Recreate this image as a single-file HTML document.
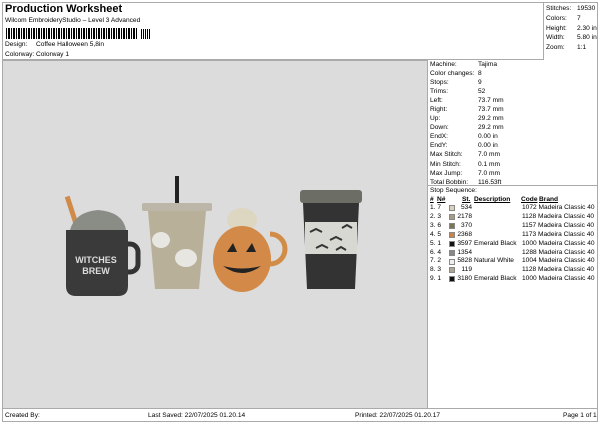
<!DOCTYPE html>
<html><head><style>
body{margin:0;width:600px;height:424px;background:#fff;font-family:"Liberation Sans",Arial,sans-serif;font-size:6.6px;color:#000;position:relative;overflow:hidden}
.a{position:absolute;white-space:nowrap}
.b{position:absolute;border:1px solid #999}
.sw{position:absolute;left:449px;width:6px;height:6px;box-sizing:border-box;border:1px solid #888}
</style></head><body>
<div class="b" style="left:2px;top:2px;width:594px;height:418px;border-color:#aaa"></div>
<div class="b" style="left:2px;top:2px;width:540px;height:56px;border-color:#aaa"></div>
<div class="a" style="left:5px;top:3px;font-size:11px;font-weight:bold">Production Worksheet</div>
<div class="a" style="left:5px;top:17px">Wilcom EmbroideryStudio – Level 3 Advanced</div>
<div class="a" style="left:6px;top:28px;width:132px;height:11px;background:repeating-linear-gradient(90deg,#000 0 1px,#fff 1px 2px,#000 2px 4px,#fff 4px 5px)"></div>
<div class="a" style="left:141px;top:29px;width:10px;height:10px;background:repeating-linear-gradient(90deg,#000 0 1px,#fff 1px 2px,#000 2px 3px,#fff 3px 4px)"></div>
<div class="a" style="left:5px;top:41px">Design:</div><div class="a" style="left:36px;top:41px">Coffee Halloween 5,8in</div>
<div class="a" style="left:5px;top:51px">Colorway:</div><div class="a" style="left:36px;top:51px">Colorway 1</div>
<div class="a" style="left:546px;top:4px;line-height:9.8px">Stitches:<br>Colors:<br>Height:<br>Width:<br>Zoom:</div>
<div class="a" style="left:577px;top:4px;line-height:9.8px">19530<br>7<br>2.30 in<br>5.80 in<br>1:1</div>
<div class="a" style="left:3px;top:60px;width:424px;height:348px;background:#dcdcdc;border-right:1px solid #aaa;border-top:1px solid #aaa"></div>
<div class="a" style="left:2px;top:408px;width:595px;border-top:1px solid #aaa"></div>
<div class="a" style="left:428px;top:185px;width:169px;border-top:1px solid #aaa"></div>
<div class="a" style="left:430px;top:60px;line-height:9.05px">Machine:<br>Color changes:<br>Stops:<br>Trims:<br>Left:<br>Right:<br>Up:<br>Down:<br>EndX:<br>EndY:<br>Max Stitch:<br>Min Stitch:<br>Max Jump:<br>Total Bobbin:</div>
<div class="a" style="left:478px;top:60px;line-height:9.05px">Tajima<br>8<br>9<br>52<br>73.7 mm<br>73.7 mm<br>29.2 mm<br>29.2 mm<br>0.00 in<br>0.00 in<br>7.0 mm<br>0.1 mm<br>7.0 mm<br>116.53ft</div>
<div class="a" style="left:430px;top:187px">Stop Sequence:</div>
<div class="a" style="left:430px;top:196px;font-weight:bold;text-decoration:underline">#</div>
<div class="a" style="left:437px;top:196px;font-weight:bold;text-decoration:underline">N#</div>
<div class="a" style="left:462px;top:196px;font-weight:bold;text-decoration:underline">St.</div>
<div class="a" style="left:474px;top:196px;font-weight:bold;text-decoration:underline">Description</div>
<div class="a" style="left:521px;top:196px;font-weight:bold;text-decoration:underline">Code</div>
<div class="a" style="left:539px;top:196px;font-weight:bold;text-decoration:underline">Brand</div>
<div class="a" style="left:430px;top:204px;line-height:8.9px">1. 7<br>2. 3<br>3. 6<br>4. 5<br>5. 1<br>6. 4<br>7. 2<br>8. 3<br>9. 1</div>
<div class="sw" style="top:205px;background:#d8d2bc"></div>
<div class="sw" style="top:214px;background:#a89a88"></div>
<div class="sw" style="top:223px;background:#7d7558"></div>
<div class="sw" style="top:232px;background:#c7834a"></div>
<div class="sw" style="top:241px;background:#111"></div>
<div class="sw" style="top:250px;background:#888"></div>
<div class="sw" style="top:259px;background:#f0f0f0"></div>
<div class="sw" style="top:267px;background:#b0a592"></div>
<div class="sw" style="top:276px;background:#111"></div>
<div class="a" style="left:455px;top:204px;line-height:8.9px;text-align:right;width:17px">534<br>2178<br>370<br>2368<br>3597<br>1354<br>5828<br>119<br>3180</div>
<div class="a" style="left:474px;top:204px;line-height:8.9px">&nbsp;<br>&nbsp;<br>&nbsp;<br>&nbsp;<br>Emerald Black<br>&nbsp;<br>Natural White<br>&nbsp;<br>Emerald Black</div>
<div class="a" style="left:522px;top:204px;line-height:8.9px">1072 Madeira Classic 40<br>1128 Madeira Classic 40<br>1157 Madeira Classic 40<br>1173 Madeira Classic 40<br>1000 Madeira Classic 40<br>1288 Madeira Classic 40<br>1004 Madeira Classic 40<br>1128 Madeira Classic 40<br>1000 Madeira Classic 40</div>
<div class="a" style="left:5px;top:412px">Created By:</div>
<div class="a" style="left:148px;top:412px">Last Saved: 22/07/2025 01.20.14</div>
<div class="a" style="left:355px;top:412px">Printed: 22/07/2025 01.20.17</div>
<div class="a" style="left:563px;top:412px">Page 1 of 1</div>
<svg class="a" style="left:60px;top:170px" width="310" height="130" viewBox="0 0 310 130">
<rect x="9" y="26" width="5" height="28" fill="#d08a4a" transform="rotate(-18 11 40)"/>
<path d="M62 74 h8 a8 8 0 0 1 8 8 v12 a8 8 0 0 1 -8 8 h-8" fill="none" stroke="#333" stroke-width="5"/>
<path d="M10 60 q5 -18 28 -20 q25 2 28 20z" fill="#8a8c86"/>
<path d="M6 60 h62 v56 q0 10 -10 10 h-42 q-10 0 -10 -10z" fill="#3a3a3a"/>
<text x="36" y="93" font-size="9" font-weight="bold" fill="#ddd" text-anchor="middle">WITCHES</text>
<text x="36" y="104" font-size="9" font-weight="bold" fill="#ddd" text-anchor="middle">BREW</text>
<rect x="115" y="6" width="4" height="28" fill="#222"/>
<rect x="82" y="33" width="70" height="8" rx="2" fill="#bbb6a8"/>
<path d="M88 41 h58 l-7 78 h-44z" fill="#b9b09a"/>
<ellipse cx="101" cy="70" rx="9" ry="8" fill="#e8e6e0"/><ellipse cx="126" cy="88" rx="11" ry="9" fill="#e8e6e0"/>
<path d="M210 64 a13 13 0 0 1 0 30" fill="none" stroke="#d18c48" stroke-width="5"/>
<ellipse cx="182" cy="50" rx="15" ry="12" fill="#ddd6c0"/>
<ellipse cx="182" cy="89" rx="29" ry="33" fill="#d38a48"/>
<polygon points="167,82 173,73 177,82" fill="#222"/><polygon points="186,82 192,73 196,82" fill="#222"/>
<path d="M163 96 q19 14 38 0 q-19 5 -38 0z" fill="#222"/>
<rect x="240" y="20" width="62" height="13" rx="3" fill="#6c6e66"/>
<path d="M243 33 h56 l-4 86 h-48z" fill="#333"/>
<rect x="245" y="52" width="52" height="32" fill="#d8d8d2"/>
<path d="M250 62 l6 -3 6 3 M270 70 l6 -3 6 3 M282 58 l5 -3 5 3 M256 78 l6 -3 6 3 M276 80 l5 -3 5 3" stroke="#333" stroke-width="2" fill="none"/>
</svg>
</body></html>
